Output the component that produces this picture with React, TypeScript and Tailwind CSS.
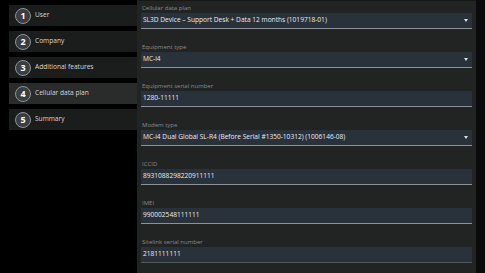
import React from "react";

const steps = [
  { n: 1, label: "User" },
  { n: 2, label: "Company" },
  { n: 3, label: "Additional features" },
  { n: 4, label: "Cellular data plan", active: true },
  { n: 5, label: "Summary" },
];

const fields = [
  { label: "Cellular data plan", value: "SL3D Device – Support Desk + Data 12 months (1019718-01)", select: true },
  { label: "Equipment type", value: "MC-i4", select: true },
  { label: "Equipment serial number", value: "1280-11111" },
  { label: "Modem type", value: "MC-i4 Dual Global SL-R4 (Before Serial #1350-10312) (1006146-08)", select: true },
  { label: "ICCID", value: "8931088298220911111" },
  { label: "IMEI", value: "990002548111111" },
  { label: "Sitelink serial number", value: "2181111111", last: true },
];

export default function App() {
  return (
    <div
      className="w-[485px] h-[273px] overflow-hidden bg-black flex"
      style={{ fontFamily: '"Open Sans", "Noto Sans", sans-serif' }}
    >
      <div className="w-[137px] shrink-0 pl-[9px] pt-[5px] flex flex-col gap-[5px]">
        {steps.map((s) => (
          <div
            key={s.n}
            className={`h-[21px] flex items-center pl-[6px] ${s.active ? "bg-[#2a2b2b]" : "bg-[#1b1c1c]"}`}
          >
            <div className="w-[16px] h-[16px] rounded-full bg-[#3a3e42] border border-[#8d9398] flex items-center justify-center text-[9px] font-bold text-white leading-none">
              {s.n}
            </div>
            <span className="ml-[4px] text-[6.6px] text-[#d8d8d8] leading-none">{s.label}</span>
          </div>
        ))}
      </div>
      <div className="w-[339px] shrink-0 bg-[#222424] border-t border-[#171818] pt-[2px] px-[4px] flex flex-col gap-[13px]">
        {fields.map((f) => (
          <div key={f.label} className="flex flex-col">
            <div className="h-[10px] flex items-center text-[6px] text-[#878b8e] leading-none pl-[1px]">{f.label}</div>
            <div
              className={`h-[16px] bg-[#29313a] border-b ${f.last ? "border-[#55585b]" : "border-[#8e9296]"} flex items-center pl-[2px] pr-[4px]`}
            >
              <span className="flex-1 text-[6.6px] text-[#ececec] leading-none whitespace-nowrap">{f.value}</span>
              {f.select && (
                <svg width="4" height="3" viewBox="0 0 4 3" className="shrink-0">
                  <path d="M0 0 L4 0 L2 3 Z" fill="#e0e0e0" />
                </svg>
              )}
            </div>
          </div>
        ))}
      </div>
      <div className="flex-1 bg-[#0b0b0b]" />
    </div>
  );
}
